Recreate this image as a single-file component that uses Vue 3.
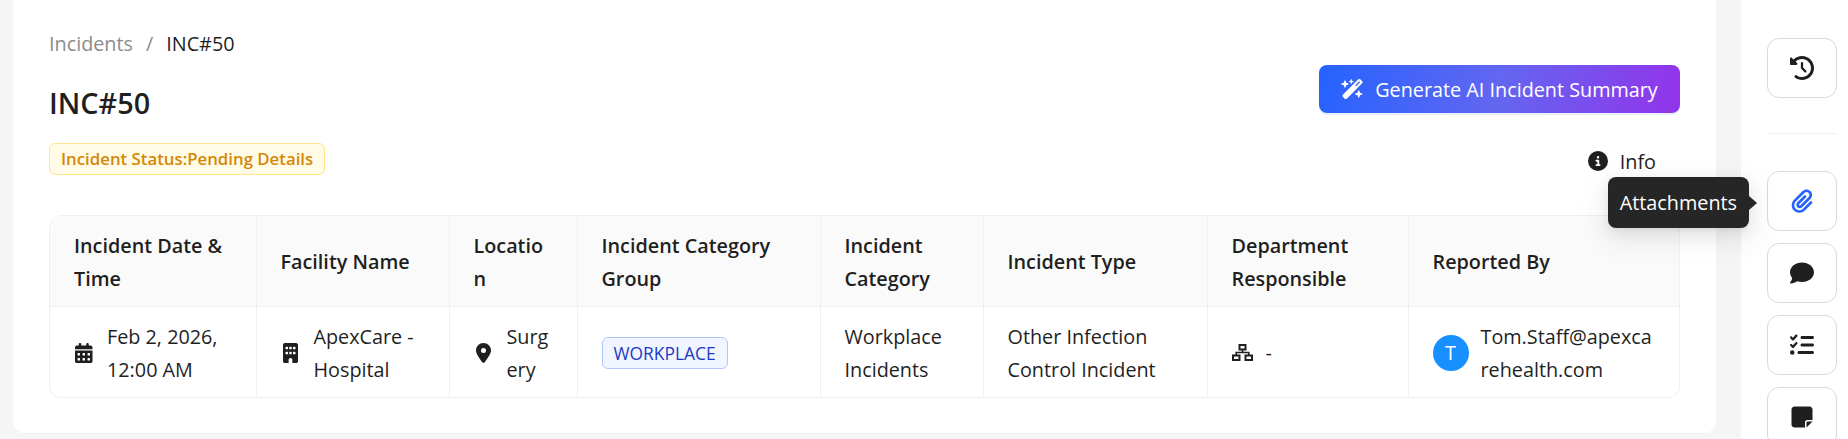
<script setup>
const columns = [
  { label: 'Incident Date & Time', width: 206 },
  { label: 'Facility Name', width: 193 },
  { label: 'Location', width: 128 },
  { label: 'Incident Category Group', width: 243 },
  { label: 'Incident Category', width: 163 },
  { label: 'Incident Type', width: 224 },
  { label: 'Department Responsible', width: 201 },
  { label: 'Reported By', width: 272 },
]

const icons = {
  calendar: { box: '0 0 448 512', d: 'M128 0c17.7 0 32 14.3 32 32V64H288V32c0-17.7 14.3-32 32-32s32 14.3 32 32V64h48c26.5 0 48 21.5 48 48v48H0V112C0 85.5 21.5 64 48 64H96V32c0-17.7 14.3-32 32-32zM0 192H448V464c0 26.5-21.5 48-48 48H48c-26.5 0-48-21.5-48-48V192zm64 80v32c0 8.8 7.2 16 16 16h32c8.8 0 16-7.2 16-16V272c0-8.8-7.2-16-16-16H80c-8.8 0-16 7.2-16 16zm128 0v32c0 8.8 7.2 16 16 16h32c8.8 0 16-7.2 16-16V272c0-8.8-7.2-16-16-16H208c-8.8 0-16 7.2-16 16zm144-16c-8.8 0-16 7.2-16 16v32c0 8.8 7.2 16 16 16h32c8.8 0 16-7.2 16-16V272c0-8.8-7.2-16-16-16H336zM64 400v32c0 8.8 7.2 16 16 16h32c8.8 0 16-7.2 16-16V400c0-8.8-7.2-16-16-16H80c-8.8 0-16 7.2-16 16zm144-16c-8.8 0-16 7.2-16 16v32c0 8.8 7.2 16 16 16h32c8.8 0 16-7.2 16-16V400c0-8.8-7.2-16-16-16H208zm112 16v32c0 8.8 7.2 16 16 16h32c8.8 0 16-7.2 16-16V400c0-8.8-7.2-16-16-16H336c-8.8 0-16 7.2-16 16z' },
  building: { box: '0 0 384 512', d: 'M48 0C21.5 0 0 21.5 0 48V464c0 26.5 21.5 48 48 48h96V432c0-26.5 21.5-48 48-48s48 21.5 48 48v80h96c26.5 0 48-21.5 48-48V48c0-26.5-21.5-48-48-48H48zM64 240c0-8.8 7.2-16 16-16h32c8.8 0 16 7.2 16 16v32c0 8.8-7.2 16-16 16H80c-8.8 0-16-7.2-16-16V240zm112-16h32c8.8 0 16 7.2 16 16v32c0 8.8-7.2 16-16 16H176c-8.8 0-16-7.2-16-16V240c0-8.8 7.2-16 16-16zm80 16c0-8.8 7.2-16 16-16h32c8.8 0 16 7.2 16 16v32c0 8.8-7.2 16-16 16H272c-8.8 0-16-7.2-16-16V240zM80 96h32c8.8 0 16 7.2 16 16v32c0 8.8-7.2 16-16 16H80c-8.8 0-16-7.2-16-16V112c0-8.8 7.2-16 16-16zm80 16c0-8.8 7.2-16 16-16h32c8.8 0 16 7.2 16 16v32c0 8.8-7.2 16-16 16H176c-8.8 0-16-7.2-16-16V112zM272 96h32c8.8 0 16 7.2 16 16v32c0 8.8-7.2 16-16 16H272c-8.8 0-16-7.2-16-16V112c0-8.8 7.2-16 16-16z' },
  location: { box: '0 0 384 512', d: 'M215.7 499.2C267 435 384 279.4 384 192C384 86 298 0 192 0S0 86 0 192c0 87.4 117 243 168.3 307.2c12.3 15.3 35.1 15.3 47.4 0zM192 128a64 64 0 1 1 0 128 64 64 0 1 1 0-128z' },
  info: { box: '0 0 512 512', d: 'M256 512A256 256 0 1 0 256 0a256 256 0 1 0 0 512zM216 336h24V272H216c-13.3 0-24-10.7-24-24s10.7-24 24-24h48c13.3 0 24 10.7 24 24v88h8c13.3 0 24 10.7 24 24s-10.7 24-24 24H216c-13.3 0-24-10.7-24-24s10.7-24 24-24zm40-208a32 32 0 1 1 0 64 32 32 0 1 1 0-64z' },
  history: { box: '0 0 512 512', d: 'M75 75L41 41C25.9 25.9 0 36.6 0 57.9V168c0 13.3 10.7 24 24 24H134.1c21.4 0 32.1-25.9 17-41l-30.8-30.8C155 85.5 203 64 256 64c106 0 192 86 192 192s-86 192-192 192c-40.8 0-78.6-12.7-109.7-34.4c-14.5-10.1-34.4-6.6-44.6 7.9s-6.6 34.4 7.9 44.6C151.2 495 201.7 512 256 512c141.4 0 256-114.6 256-256S397.4 0 256 0C185.3 0 121.3 28.7 75 75zm181 53c-13.3 0-24 10.7-24 24V256c0 6.4 2.5 12.5 7 17l72 72c9.4 9.4 24.6 9.4 33.9 0s9.4-24.6 0-33.9l-65-65V152c0-13.3-10.7-24-24-24z' },
  paperclip: { box: '0 0 448 512', d: 'M364.2 83.8c-24.4-24.4-64-24.4-88.4 0l-184 184c-42.1 42.1-42.1 110.3 0 152.4s110.3 42.1 152.4 0l152-152c10.9-10.9 28.7-10.9 39.6 0s10.9 28.7 0 39.6l-152 152c-64 64-167.6 64-231.6 0s-64-167.6 0-231.6l184-184c46.3-46.3 121.3-46.3 167.6 0s46.3 121.3 0 167.6l-176 176c-28.6 28.6-75 28.6-103.6 0s-28.6-75 0-103.6l144-144c10.9-10.9 28.7-10.9 39.6 0s10.9 28.7 0 39.6l-144 144c-6.7 6.7-6.7 17.7 0 24.4s17.7 6.7 24.4 0l176-176c24.4-24.4 24.4-64 0-88.4z' },
  comment: { box: '0 0 512 512', d: 'M512 240c0 114.9-114.6 208-256 208c-37.1 0-72.3-6.4-104.1-17.9c-11.9 8.7-31.3 20.6-54.3 30.6C73.6 471.1 44.7 480 16 480c-6.5 0-12.3-3.9-14.8-9.9c-2.5-6-1.1-12.8 3.4-17.4l0 0 .3-.3c.3-.3 .7-.7 1.3-1.4c1.1-1.2 2.8-3.1 4.9-5.7c4.1-5 9.6-12.4 15.2-21.6c10-16.6 19.5-38.4 21.4-62.9C17.7 326.8 0 285.1 0 240C0 125.1 114.6 32 256 32s256 93.1 256 208z' },
  checklist: { box: '0 0 512 512', d: 'M152.1 38.2c9.9 8.9 10.7 24 1.8 33.9l-72 80c-4.4 4.9-10.6 7.8-17.2 7.9s-12.9-2.4-17.6-7L7 113C-2.3 103.6-2.3 88.4 7 79s24.6-9.4 33.9 0l22.1 22.1 55.1-61.2c8.9-9.9 24-10.7 33.9-1.8zm0 160c9.9 8.9 10.7 24 1.8 33.9l-72 80c-4.4 4.9-10.6 7.8-17.2 7.9s-12.9-2.4-17.6-7L7 273c-9.4-9.4-9.4-24.6 0-33.9s24.6-9.4 33.9 0l22.1 22.1 55.1-61.2c8.9-9.9 24-10.7 33.9-1.8zM224 96c0-17.7 14.3-32 32-32H480c17.7 0 32 14.3 32 32s-14.3 32-32 32H256c-17.7 0-32-14.3-32-32zm0 160c0-17.7 14.3-32 32-32H480c17.7 0 32 14.3 32 32s-14.3 32-32 32H256c-17.7 0-32-14.3-32-32zM160 416c0-17.7 14.3-32 32-32H480c17.7 0 32 14.3 32 32s-14.3 32-32 32H192c-17.7 0-32-14.3-32-32zM48 368a48 48 0 1 1 0 96 48 48 0 1 1 0-96z' },
  note: { box: '0 0 448 512', d: 'M64 32C28.7 32 0 60.7 0 96V416c0 35.3 28.7 64 64 64H288V368c0-26.5 21.5-48 48-48H448V96c0-35.3-28.7-64-64-64H64zM448 352H402.7 336c-8.8 0-16 7.2-16 16v66.7V480l32-32 64-64 32-32z' },
  wand: { box: '0 0 576 512', d: 'M234.7 42.7L197 56.8c-3 1.1-5 4-5 7.2s2 6.1 5 7.2l37.7 14.1L248.8 123c1.1 3 4 5 7.2 5s6.1-2 7.2-5l14.1-37.7L315 71.2c3-1.1 5-4 5-7.2s-2-6.1-5-7.2L277.3 42.7 263.2 5c-1.1-3-4-5-7.2-5s-6.1 2-7.2 5L234.7 42.7zM46.1 395.4c-18.7 18.7-18.7 49.1 0 67.9l34.6 34.6c18.7 18.7 49.1 18.7 67.9 0L529.9 116.5c18.7-18.7 18.7-49.1 0-67.9L495.3 14.1c-18.7-18.7-49.1-18.7-67.9 0L46.1 395.4zM484.6 82.6l-105 105-23.3-23.3 105-105 23.3 23.3zM7.5 117.2C3 118.9 0 123.2 0 128s3 9.1 7.5 10.8L64 160l21.2 56.5c1.7 4.5 6 7.5 10.8 7.5s9.1-3 10.8-7.5L128 160l56.5-21.2c4.5-1.7 7.5-6 7.5-10.8s-3-9.1-7.5-10.8L128 96 106.8 39.5C105.1 35 100.8 32 96 32s-9.1 3-10.8 7.5L64 96 7.5 117.2zm352 256c-4.5 1.7-7.5 6-7.5 10.8s3 9.1 7.5 10.8L416 416l21.2 56.5c1.7 4.5 6 7.5 10.8 7.5s9.1-3 10.8-7.5L480 416l56.5-21.2c4.5-1.7 7.5-6 7.5-10.8s-3-9.1-7.5-10.8L480 352l-21.2-56.5c-1.7-4.5-6-7.5-10.8-7.5s-9.1 3-10.8 7.5L416 352l-56.5 21.2z' },
}

const sideButtons = ['paperclip', 'comment', 'checklist', 'note']
</script>

<template>
  <div class="page">
    <main class="main">
      <section class="card">
        <div class="breadcrumb">
          <span class="crumb-link">Incidents</span>
          <span class="crumb-sep">/</span>
          <span>INC#50</span>
        </div>

        <div class="head">
          <div>
            <h1 class="title">INC#50</h1>
            <span class="status">Incident Status:Pending Details</span>
          </div>
          <div class="actions">
            <button class="ai-btn">
              <svg class="wand" :viewBox="icons.wand.box"><path :d="icons.wand.d" /></svg>
              Generate AI Incident Summary
            </button>
            <div class="info">
              <svg class="info-icon" :viewBox="icons.info.box"><path :d="icons.info.d" /></svg>
              Info
            </div>
          </div>
        </div>

        <div class="table-wrap">
          <table class="table">
            <colgroup>
              <col v-for="c in columns" :key="c.label" :style="{ width: c.width + 'px' }" />
            </colgroup>
            <thead>
              <tr>
                <th v-for="c in columns" :key="c.label">{{ c.label }}</th>
              </tr>
            </thead>
            <tbody>
              <tr>
                <td>
                  <div class="cell">
                    <span class="cell-icon"><svg :viewBox="icons.calendar.box"><path :d="icons.calendar.d" /></svg></span>
                    <span class="cell-text">Feb 2, 2026, 12:00 AM</span>
                  </div>
                </td>
                <td>
                  <div class="cell">
                    <span class="cell-icon"><svg :viewBox="icons.building.box"><path :d="icons.building.d" /></svg></span>
                    <span class="cell-text">ApexCare - Hospital</span>
                  </div>
                </td>
                <td>
                  <div class="cell">
                    <span class="cell-icon"><svg :viewBox="icons.location.box"><path :d="icons.location.d" /></svg></span>
                    <span class="cell-text">Surgery</span>
                  </div>
                </td>
                <td><span class="tag">WORKPLACE</span></td>
                <td>Workplace Incidents</td>
                <td>Other Infection Control Incident</td>
                <td>
                  <div class="cell">
                    <span class="cell-icon dept">
                      <svg viewBox="0 0 21 17" stroke="#1f1f1f">
                        <rect x="7.5" y="1" width="6" height="4.5" fill="none" stroke-width="2" />
                        <rect x="1" y="11.5" width="6.5" height="4.5" fill="none" stroke-width="2" />
                        <rect x="13.5" y="11.5" width="6.5" height="4.5" fill="none" stroke-width="2" />
                        <path d="M10.5 6v2.5M4.2 11V8.5h12.6V11" fill="none" stroke-width="1.6" />
                      </svg>
                    </span>
                    <span class="cell-text">-</span>
                  </div>
                </td>
                <td>
                  <div class="cell reporter">
                    <span class="avatar">T</span>
                    <span class="cell-text">Tom.Staff@apexcarehealth.com</span>
                  </div>
                </td>
              </tr>
            </tbody>
          </table>
        </div>
      </section>
    </main>

    <aside class="side">
      <button class="side-btn">
        <svg :viewBox="icons.history.box"><path :d="icons.history.d" /></svg>
      </button>
      <div class="side-divider"></div>
      <div class="side-list">
        <button v-for="name in sideButtons" :key="name" class="side-btn" :class="{ active: name === 'paperclip' }">
          <svg :viewBox="icons[name].box"><path :d="icons[name].d" /></svg>
          <span v-if="name === 'paperclip'" class="tooltip">Attachments</span>
        </button>
      </div>
    </aside>
  </div>
</template>

<style>
html, body {
  margin: 0;
  height: 439px;
  overflow: hidden;
  background: #f5f5f5;
}
</style>

<style scoped>
.page {
  display: flex;
  height: 439px;
  overflow: hidden;
  font-family: "Open Sans", "Noto Sans", sans-serif;
  font-size: 19.8px;
  color: #1f1f1f;
}

.main {
  flex: 1;
  min-width: 0;
  padding: 0 25px 0 13px;
}

.card {
  box-sizing: border-box;
  height: 433px;
  padding: 30px 36px 36px 36px;
  background: #fff;
  border-radius: 0 0 12px 12px;
}

.breadcrumb {
  display: flex;
  gap: 13px;
  height: 28px;
  line-height: 28px;
}

.crumb-link,
.crumb-sep {
  color: #8c8c8c;
}

.head {
  display: flex;
  justify-content: space-between;
  height: 157px;
}

.title {
  margin: 24px 0 0;
  font-size: 28.8px;
  font-weight: 600;
  line-height: 42px;
}

.status {
  display: inline-block;
  margin-top: 19px;
  padding: 0 11px;
  height: 30px;
  line-height: 30px;
  font-size: 16.8px;
  font-weight: 600;
  color: #d48806;
  background: #fffbe6;
  border: 1px solid #ffe58f;
  border-radius: 6px;
}

.actions {
  display: flex;
  flex-direction: column;
  align-items: flex-end;
  padding-top: 7px;
}

.ai-btn {
  display: flex;
  align-items: center;
  justify-content: center;
  gap: 11px;
  width: 361px;
  height: 48px;
  padding: 0;
  border: 0;
  border-radius: 8px;
  font: inherit;
  color: #fff;
  background: linear-gradient(100deg, #2563ff 0%, #6366f1 50%, #9333ea 100%);
  box-shadow: 0 2px 0 rgba(37, 99, 255, 0.1);
}

.wand {
  width: 23px;
  height: 20px;
  fill: #fff;
}

.info {
  display: flex;
  align-items: center;
  gap: 12px;
  margin-top: 36px;
  padding-right: 24px;
  height: 24px;
}

.info-icon {
  width: 20px;
  height: 20px;
  fill: #1f1f1f;
}

.table-wrap {
  border: 1px solid #f0f0f0;
  border-radius: 12px;
  overflow: hidden;
}

.table {
  width: 100%;
  table-layout: fixed;
  border-collapse: collapse;
  line-height: 33px;
}

th,
td {
  height: 90px;
  padding: 2px 24px 0;
  box-sizing: border-box;
  text-align: left;
  overflow-wrap: anywhere;
  border-right: 1px solid #f0f0f0;
}

th:last-child,
td:last-child {
  border-right: 0;
}

th {
  font-weight: 600;
  background: #fafafa;
  border-bottom: 1px solid #f0f0f0;
}

td {
  height: 91px;
  font-weight: 400;
}

.cell {
  display: flex;
  align-items: center;
  gap: 13px;
}

.cell-icon {
  flex: none;
  display: flex;
  justify-content: center;
  width: 20px;
  height: 20px;
}

.cell-icon svg {
  height: 20px;
  fill: #1f1f1f;
}

.cell-icon.dept {
  width: 21px;
  height: 17px;
}

.cell-icon.dept svg {
  width: 21px;
  height: 17px;
}

.cell-text {
  min-width: 0;
}

.tag {
  display: inline-block;
  padding: 0 11px;
  height: 30px;
  line-height: 30px;
  font-size: 17.4px;
  color: #1d39c4;
  background: #f0f5ff;
  border: 1px solid #adc6ff;
  border-radius: 6px;
}

.avatar {
  flex: none;
  width: 36px;
  height: 36px;
  line-height: 36px;
  text-align: center;
  color: #fff;
  background: #1890ff;
  border-radius: 50%;
}

.reporter {
  gap: 12px;
}

.side {
  box-sizing: border-box;
  flex: none;
  width: 107px;
  padding: 38px 11px 0 26px;
  background: #fff;
}

.side-divider {
  height: 1px;
  margin: 35px 0 37px;
  background: #f0f0f0;
}

.side-list {
  display: flex;
  flex-direction: column;
  gap: 12px;
}

.side-btn {
  position: relative;
  display: flex;
  align-items: center;
  justify-content: center;
  flex: none;
  box-sizing: border-box;
  width: 70px;
  height: 60px;
  padding: 0;
  background: #fff;
  border: 1px solid #d9d9d9;
  border-radius: 12px;
}

.side-btn svg {
  width: 24px;
  height: 24px;
  fill: #1f1f1f;
}

.side-btn.active svg {
  fill: #2563ff;
}

.tooltip {
  position: absolute;
  right: 87px;
  top: 5px;
  padding: 0 12px;
  height: 51px;
  font: 19.8px/51px "Open Sans", sans-serif;
  color: #fff;
  background: #262626;
  border-radius: 8px;
  white-space: nowrap;
  box-shadow: 0 6px 16px rgba(0, 0, 0, 0.08), 0 3px 6px -4px rgba(0, 0, 0, 0.12), 0 9px 28px 8px rgba(0, 0, 0, 0.05);
}

.tooltip::after {
  content: "";
  position: absolute;
  left: 100%;
  top: 50%;
  margin-top: -7px;
  border: 7px solid transparent;
  border-right: 0;
  border-left: 8px solid #262626;
}
</style>
